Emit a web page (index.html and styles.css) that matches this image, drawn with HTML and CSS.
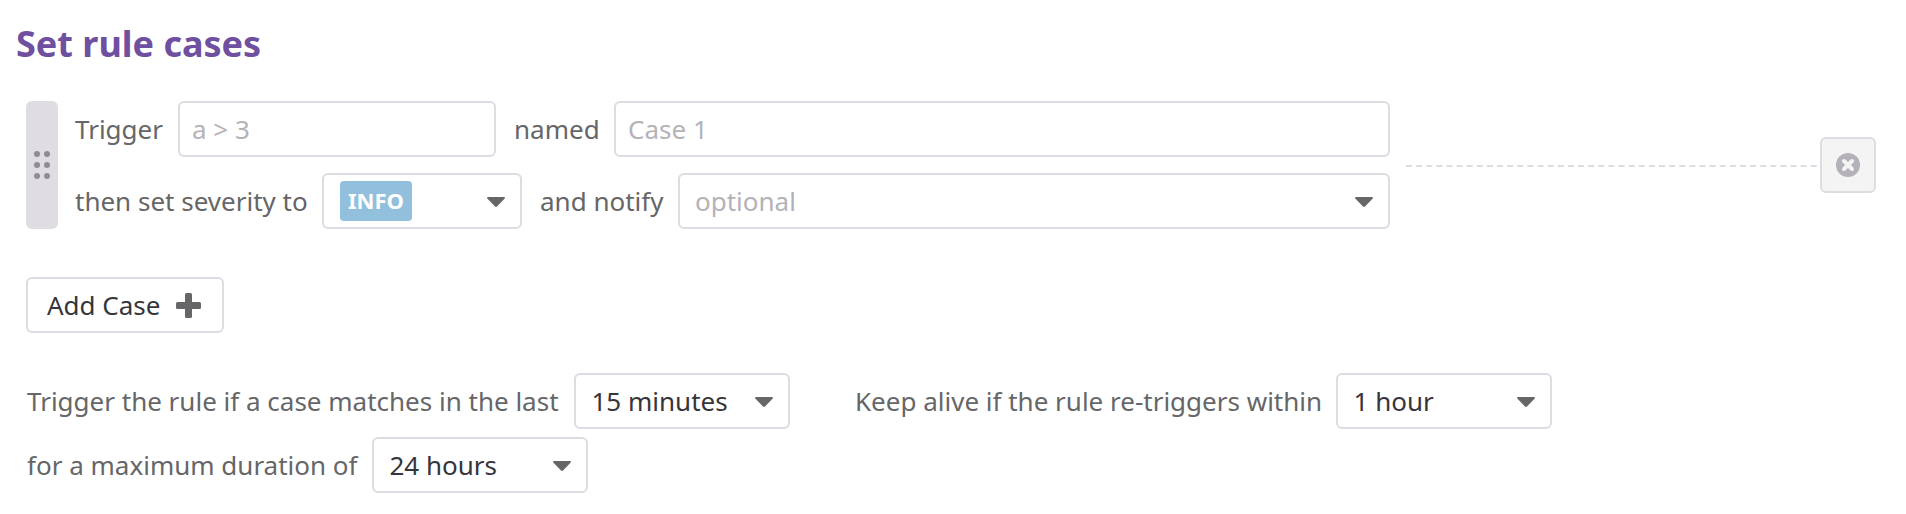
FILE: index.html
```html
<!DOCTYPE html>
<html lang="en">
<head>
<meta charset="utf-8">
<title>Set rule cases</title>
<link rel="stylesheet" href="styles.css">
</head>
<body>
<main class="panel">
  <h2 class="title">Set rule cases</h2>
  <section class="case">
    <div class="handle">
      <svg width="16" height="28" viewBox="0 0 16 28" fill="#8f8d93"><circle cx="3" cy="3" r="3"/><circle cx="13" cy="3" r="3"/><circle cx="3" cy="14" r="3"/><circle cx="13" cy="14" r="3"/><circle cx="3" cy="25" r="3"/><circle cx="13" cy="25" r="3"/></svg>
    </div>
    <div class="fields">
      <div class="line">
        <label class="label label-trigger">Trigger</label>
        <input class="box input input-query" placeholder="a &gt; 3">
        <label class="label label-named">named</label>
        <input class="box input grow" placeholder="Case 1">
      </div>
      <div class="line">
        <label class="label label-severity">then set severity to</label>
        <div class="box select select-severity"><span class="badge">INFO</span><svg class="caret" viewBox="0 0 18 10"><path d="M1 0h16q1.600.3.5 1.700L10 9.500q-1 .9-2 0L.5 1.700Q-.6.3 1 0z"/></svg></div>
        <label class="label label-notify">and notify</label>
        <div class="box select grow"><span class="placeholder">optional</span><svg class="caret" viewBox="0 0 18 10"><path d="M1 0h16q1.600.3.5 1.700L10 9.500q-1 .9-2 0L.5 1.700Q-.6.3 1 0z"/></svg></div>
      </div>
    </div>
    <svg class="divider" width="414" height="2"><path d="M0 1H414" stroke="#dddce2" stroke-width="2" stroke-dasharray="6 4.120"/></svg>
    <button class="box remove" aria-label="Remove case">
      <svg width="24" height="24" viewBox="0 0 24 24"><circle cx="12" cy="12" r="12" fill="#b4b2b8"/><path d="M8 8l8 8M16 8l-8 8" stroke="#f4f4f4" stroke-width="4" stroke-linecap="round"/></svg>
    </button>
  </section>
  <button class="box add"><span class="add-text">Add Case</span>
    <svg width="25" height="25" viewBox="0 0 25 25" fill="#666668"><rect x="9" width="7" height="25" rx="1.500"/><rect y="9" width="25" height="7" rx="1.500"/></svg>
  </button>
  <section class="timing">
    <div class="line">
      <label class="label label-match">Trigger the rule if a case matches in the last</label>
      <div class="box select select-time"><span>15 minutes</span><svg class="caret" viewBox="0 0 18 10"><path d="M1 0h16q1.600.3.5 1.700L10 9.500q-1 .9-2 0L.5 1.700Q-.6.3 1 0z"/></svg></div>
      <label class="label label-keep">Keep alive if the rule re-triggers within</label>
      <div class="box select select-time"><span>1 hour</span><svg class="caret" viewBox="0 0 18 10"><path d="M1 0h16q1.600.3.5 1.700L10 9.500q-1 .9-2 0L.5 1.700Q-.6.3 1 0z"/></svg></div>
    </div>
    <div class="line">
      <label class="label label-max">for a maximum duration of</label>
      <div class="box select select-time"><span>24 hours</span><svg class="caret" viewBox="0 0 18 10"><path d="M1 0h16q1.600.3.5 1.700L10 9.500q-1 .9-2 0L.5 1.700Q-.6.3 1 0z"/></svg></div>
    </div>
  </section>
</main>
</body>
</html>
```
FILE: styles.css
```css
* { box-sizing: border-box; }
body {
  margin: 0;
  background: #fff;
  color: #666668;
  font-family: "Noto Sans", sans-serif;
  font-size: 26px;
  line-height: 36px;
}
.panel { padding: 19px 30px 0 26px; }
.title {
  margin: 0 0 32px -10px;
  color: #6f4f9f;
  font-size: 36px;
  line-height: 50px;
  font-weight: 700;
}
.case { display: flex; align-items: center; }
.handle {
  display: flex;
  align-items: center;
  justify-content: center;
  width: 32px;
  height: 128px;
  border-radius: 6px;
  background: #dfdde2;
}
.fields {
  display: flex;
  flex-direction: column;
  gap: 16px;
  width: 1315px;
  margin-left: 17px;
}
.line { display: flex; align-items: center; }
.label { flex: none; white-space: nowrap; }
.label-trigger { width: 103px; }
.label-named { width: 118px; padding-left: 18px; }
.label-severity { width: 247px; }
.label-notify { width: 156px; padding-left: 18px; }
.label-match { width: 548px; padding-left: 1px; }
.label-keep { width: 546px; padding-left: 65px; }
.label-max { width: 346px; padding-left: 1px; }
.box {
  height: 56px;
  border: 2px solid #dddce2;
  border-radius: 6px;
  background: #fff;
  font: inherit;
}
.input { min-width: 0; padding: 0 12px; outline: none; }
.input::placeholder { color: #b4b2b8; opacity: 1; }
.input-query { width: 318px; }
.grow { flex: 1; }
.select {
  display: flex;
  align-items: center;
  justify-content: space-between;
  padding: 0 15px 0 16px;
  color: #36353b;
}
.select-severity { width: 200px; }
.select-time { width: 216px; padding-left: 15.5px; }
.placeholder { margin-left: -1px; color: #b4b2b8; }
.caret { width: 18px; height: 10px; margin-top: 2px; fill: #666668; }
.badge {
  width: 72px;
  height: 40px;
  border-radius: 4px;
  background: #92bfdc;
  color: #fff;
  font-size: 22px;
  font-weight: 700;
  line-height: 39px;
  text-align: center;
}
.divider { margin: 2px 0 0 16px; }
.remove {
  display: flex;
  align-items: center;
  justify-content: center;
  width: 56px;
  padding: 0;
  background: #f4f4f4;
}
.add {
  display: flex;
  align-items: center;
  gap: 15px;
  width: 198px;
  margin-top: 48px;
  padding: 0 0 0 19px;
  color: #36353b;
}
.timing {
  display: flex;
  flex-direction: column;
  gap: 8px;
  margin-top: 40px;
}
```
